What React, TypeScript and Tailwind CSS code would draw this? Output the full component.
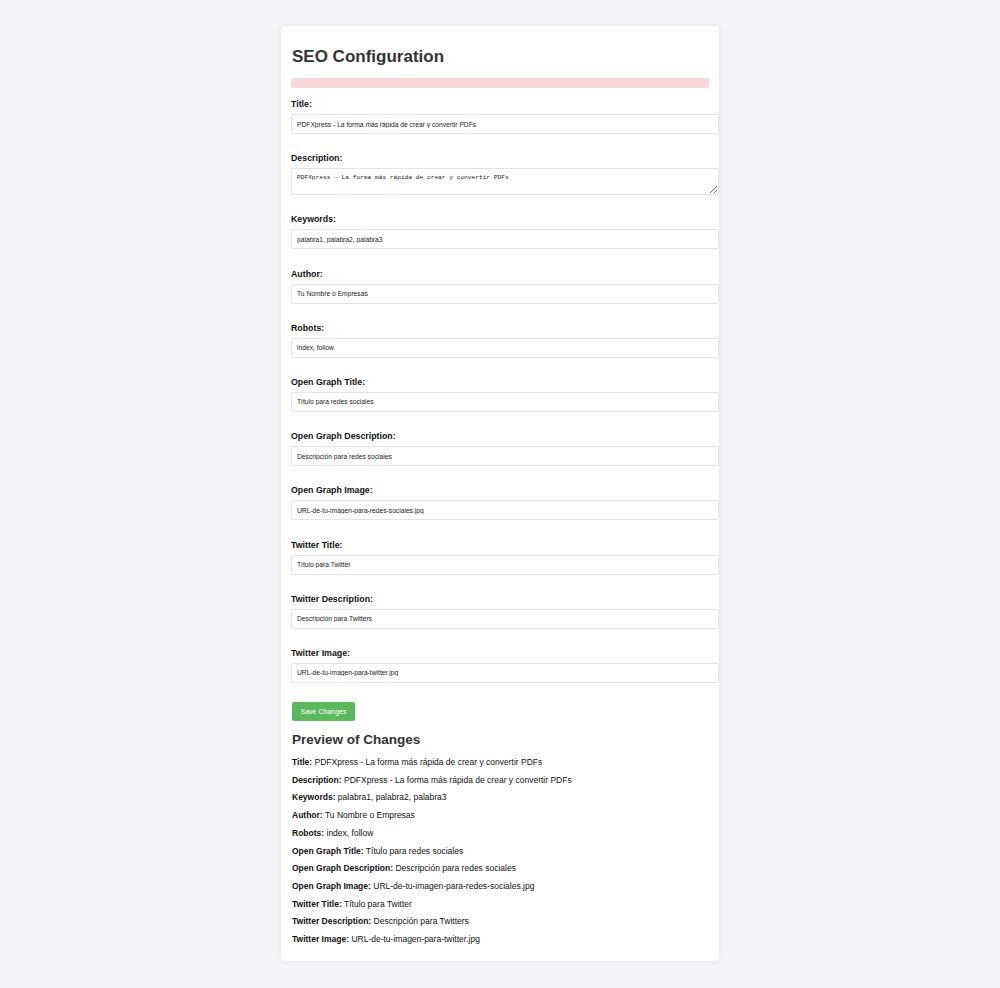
import React from 'react';

const fields = [
  { label: 'Title', value: 'PDFXpress - La forma más rápida de crear y convertir PDFs' },
  { label: 'Description', value: 'PDFXpress - La forma más rápida de crear y convertir PDFs', area: true },
  { label: 'Keywords', value: 'palabra1, palabra2, palabra3' },
  { label: 'Author', value: 'Tu Nombre o Empresas' },
  { label: 'Robots', value: 'index, follow' },
  { label: 'Open Graph Title', value: 'Título para redes sociales' },
  { label: 'Open Graph Description', value: 'Descripción para redes sociales' },
  { label: 'Open Graph Image', value: 'URL-de-tu-imagen-para-redes-sociales.jpg' },
  { label: 'Twitter Title', value: 'Título para Twitter' },
  { label: 'Twitter Description', value: 'Descripción para Twitters' },
  { label: 'Twitter Image', value: 'URL-de-tu-imagen-para-twitter.jpg' },
];

function Field({ label, value, area }: { label: string; value: string; area?: boolean }) {
  return (
    <div className="mb-[19.2px]">
      <label className="block mb-[4px] text-[8.8px] leading-[11px] font-bold text-[#111]">{label}:</label>
      {area ? (
        <textarea
          defaultValue={value}
          className="block w-[428px] h-[27px] px-[5px] py-[4px] border border-[#e4e4e4] rounded-[2px] bg-white text-[6.2px] leading-[9px] text-[#222] font-['Liberation_Mono',monospace] outline-none"
        />
      ) : (
        <input
          defaultValue={value}
          className="block w-[428px] h-[20px] px-[5px] border border-[#e4e4e4] rounded-[2px] bg-white text-[6.7px] text-[#222] font-['Liberation_Sans',Arial,sans-serif] outline-none"
        />
      )}
    </div>
  );
}

export default function App() {
  return (
    <div className="min-h-[988px] bg-[#f4f4f8] pt-[26px] pb-[27px] font-['Liberation_Sans',Arial,sans-serif]">
      <div className="w-[438px] mx-auto bg-white rounded-[4px] shadow-[0_0_6px_rgba(0,0,0,0.08)] pl-[10px] pr-[10px] pt-[21px] pb-[12px]">
        <h1 className="text-[17px] leading-[20px] font-bold text-[#333] ml-[1px]">SEO Configuration</h1>
        <div className="mt-[11px] mb-[11px] h-[10px] w-[418px] bg-[#f8d7da] rounded-[2px]" />
        {fields.map((f) => (
          <Field key={f.label} {...f} />
        ))}
        <button className="block ml-[1px] mt-[1px] w-[63px] h-[19px] bg-[#5cb85c] rounded-[2px] text-white text-[7px] leading-[19px]">
          Save Changes
        </button>
        <h2 className="mt-[10px] ml-[1px] text-[13.5px] leading-[17px] font-bold text-[#333]">Preview of Changes</h2>
        <div className="mt-[6px] ml-[1px] text-[8.5px] leading-[17.7px] text-[#111]">
          {fields.map((f) => (
            <p key={f.label}>
              <strong>{f.label}:</strong> {f.value}
            </p>
          ))}
        </div>
      </div>
    </div>
  );
}
